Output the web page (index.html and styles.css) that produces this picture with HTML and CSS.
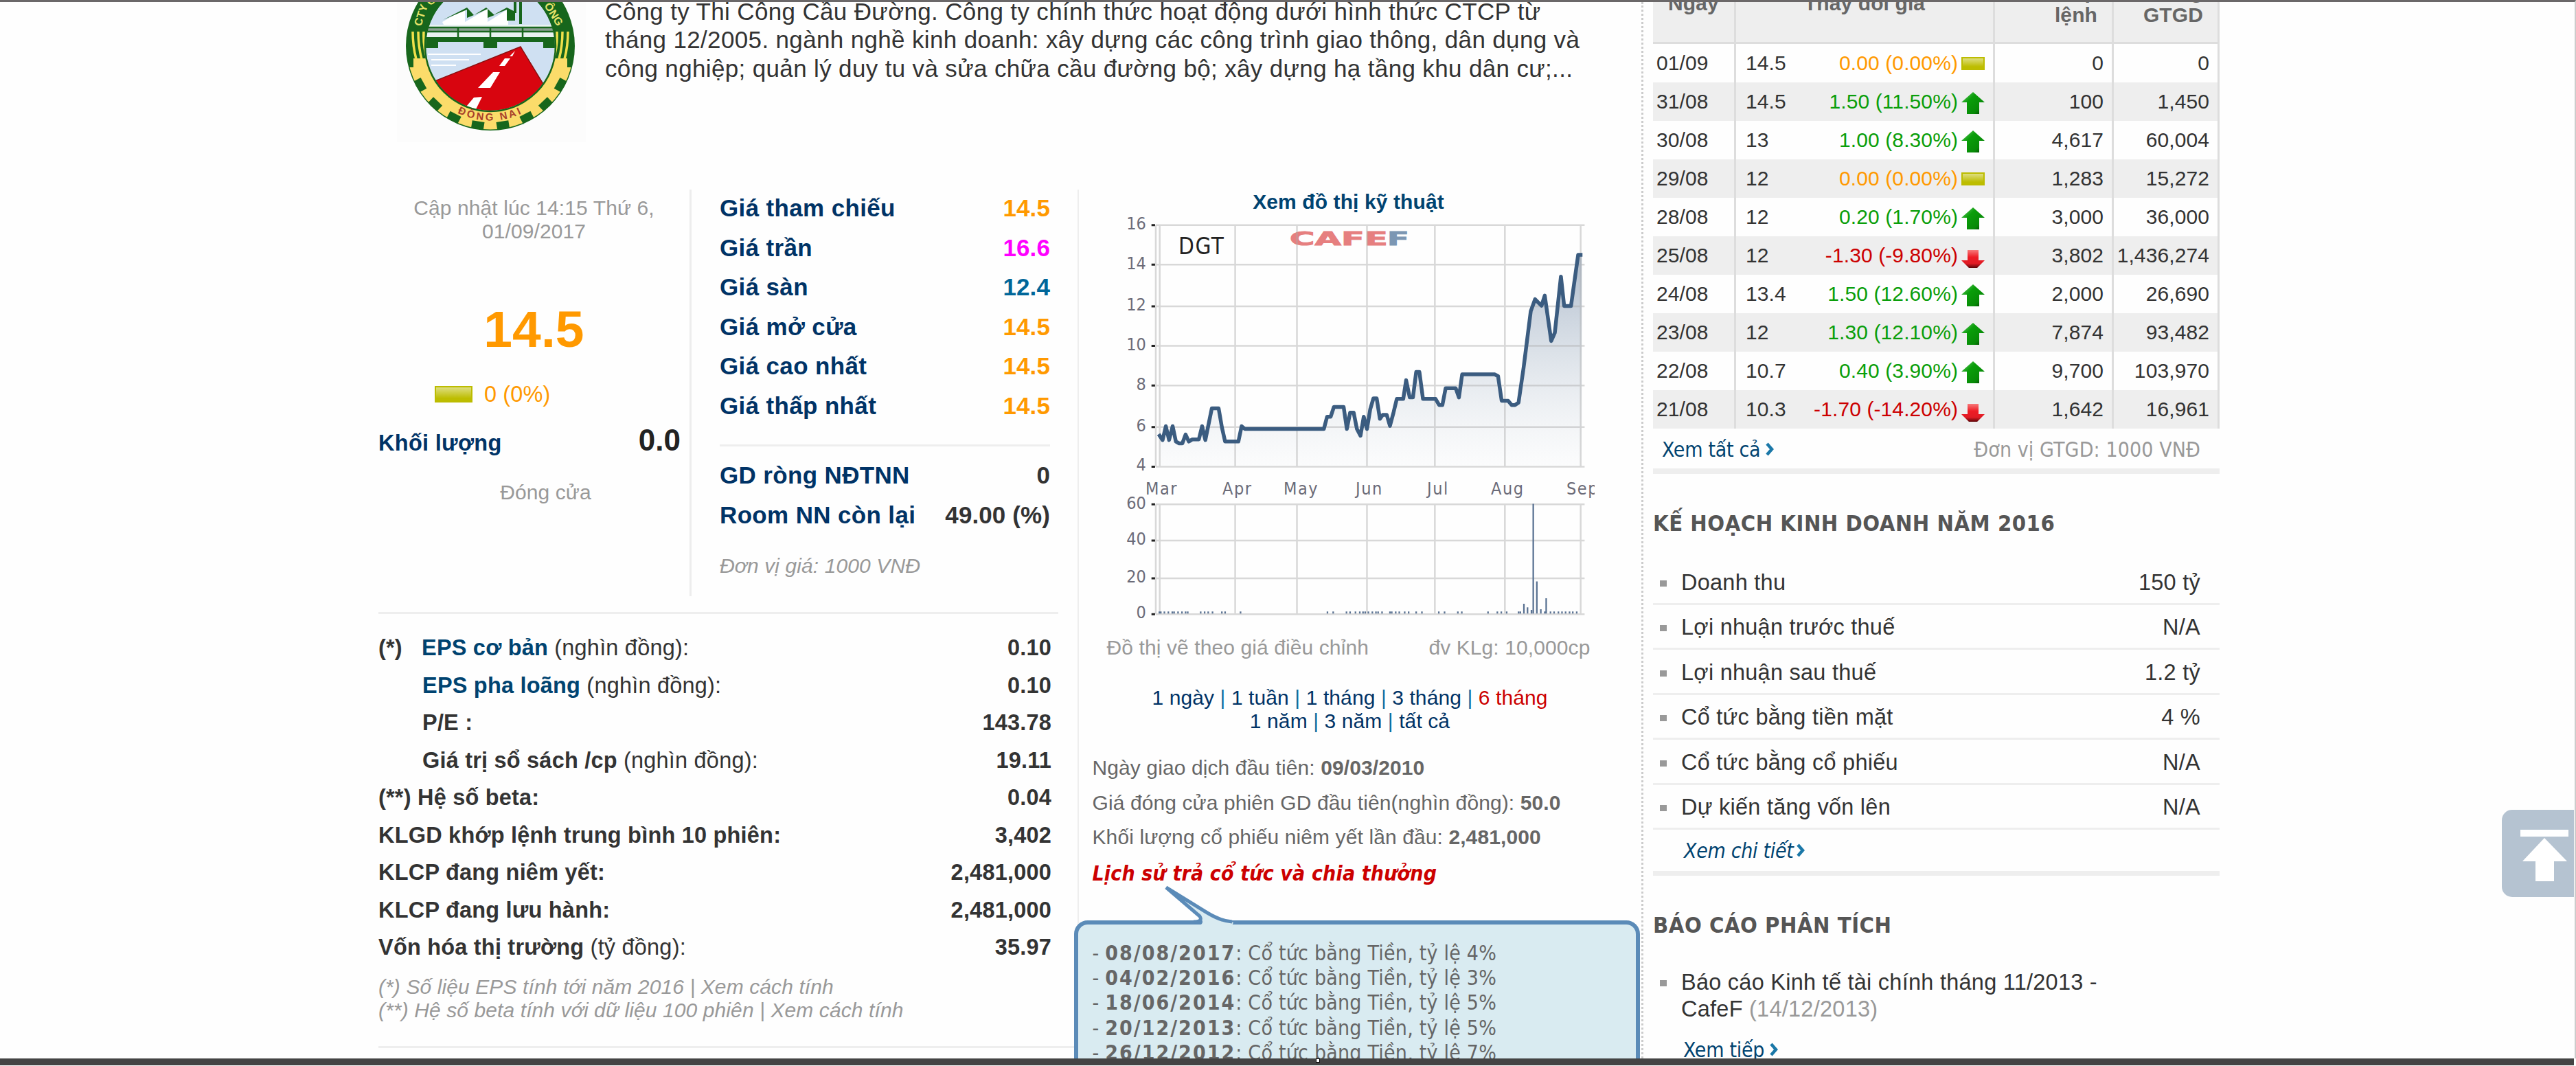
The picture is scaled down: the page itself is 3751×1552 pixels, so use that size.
FILE: index.html
```html
<!DOCTYPE html>
<html lang="vi">
<head>
    <meta charset="UTF-8">
    <title>DGT - CafeF</title>
    <link rel="stylesheet" href="styles.css">
</head>
<body>
<svg class="defs" width="0" height="0">
    <defs>
        <linearGradient id="gUp" x1="0" y1="0" x2="1" y2="1">
            <stop offset="0" stop-color="#7fd07f"/><stop offset=".35" stop-color="#0a9e0a"/><stop offset=".75" stop-color="#078a07"/><stop offset="1" stop-color="#022c02"/>
        </linearGradient>
        <linearGradient id="gDown" x1="0" y1="0" x2="0" y2="1">
            <stop offset="0" stop-color="#f77a7a"/><stop offset=".4" stop-color="#ee1c25"/><stop offset=".75" stop-color="#e01b24"/><stop offset="1" stop-color="#5c0508"/>
        </linearGradient>
        <linearGradient id="gArea" x1="0" y1="0" x2="0" y2="1">
            <stop offset="0" stop-color="#8297b0" stop-opacity=".65"/><stop offset="1" stop-color="#c8d2dc" stop-opacity=".05"/>
        </linearGradient>
        <symbol id="up" viewBox="0 0 34 32"><path d="M17 0 34 15H26V32H8V15H0Z" fill="url(#gUp)"/></symbol>
        <symbol id="down" viewBox="0 0 34 32"><path d="M9 6H25V21H34L23 32H11L0 21H9Z" fill="url(#gDown)"/></symbol>
        <symbol id="chev" viewBox="0 0 12 22"><path d="M2 3 9 11 2 19" fill="none" stroke="#1b78a8" stroke-width="4.5"/></symbol>
    </defs>
</svg>
<div class="page">
    <div class="main">
        <div class="intro">
            <svg class="logo" viewBox="0 0 275 204">
                <defs>
                    <clipPath id="inner"><circle cx="136" cy="64" r="94"/></clipPath>
                    <clipPath id="low"><path d="M0 95H24V82H248V95H275V204H0Z"/></clipPath>
                    <path id="arcBot" d="M66 147A109 109 0 0 0 206 147" fill="none"/>
                    <rect id="tooth" x="-9" y="111" width="18" height="11" fill="#17661c"/>
                </defs>
                <rect width="275" height="204" fill="#fcfcfc"/>
                <circle cx="136" cy="64" r="123" fill="#17661c"/>
                <circle cx="136" cy="64" r="121.5" fill="#fbdc6a" clip-path="url(#low)"/>
                <g transform="translate(136 64)">
                    <use href="#tooth" transform="rotate(9)"/><use href="#tooth" transform="rotate(27)"/><use href="#tooth" transform="rotate(43.5)"/><use href="#tooth" transform="rotate(61)"/>
                    <use href="#tooth" transform="rotate(-9)"/><use href="#tooth" transform="rotate(-27)"/><use href="#tooth" transform="rotate(-43.5)"/><use href="#tooth" transform="rotate(-61)"/>
                </g>
                <path d="M23 43Q23 64 28 83M31 43Q31 64 36 83M39 43Q38 64 44 83M249 43Q249 64 244 83M241 43Q241 64 236 83M233 43Q234 64 228 83" fill="none" stroke="#f0e04a" stroke-width="3.5"/>
                <g clip-path="url(#inner)">
                    <rect x="40" y="-30" width="200" height="190" fill="#cfe0f2"/>
                    <path d="M66 29 99 10V29L132 10V29L162 10V33H68Z" fill="#fff"/>
                    <path d="M40 33H240V52H40Z" fill="#e8f2f0"/>
                    <path d="M67 26 102 8 112 19 102 23V11ZM112 19 130 8 142 19 132 23V10ZM140 19 160 8 172 14V27H160V11Z" fill="#17661c"/>
                    <path d="M180-5V32M172-5V16" stroke="#17661c" stroke-width="4"/>
                    <path d="M40 40H240" stroke="#8a9f90" stroke-width="4"/>
                    <path d="M40 37H240M40 43H240M89 38V54M136 38V54M183 38V54" stroke="#17661c" stroke-width="2.5"/>
                    <path d="M40 51H240V67H213V58H146V67H126V58H60V67H40Z" fill="#17661c"/>
                    <path d="M45 76H122M50 84H105M50 92H86" stroke="#fff" stroke-width="2"/>
                    <path d="M180 65 40 121V165H240L214 121Z" fill="#d8050f" stroke="#8a1010" stroke-width="1.5"/>
                    <path d="M172 71 164 79 168 79ZM157 82 149 93H157L165 82ZM140 102 118 125H136L150 102ZM112 139 96 158H114L124 138Z" fill="#fff"/>
                </g>
                <circle cx="136" cy="64" r="95" fill="none" stroke="#17661c" stroke-width="2.5"/>
                <text class="logo-bottom"><textPath href="#arcBot" startOffset="50%">ĐỒNG NAI</textPath></text>
                <text class="logo-side" transform="translate(35 36) rotate(-72)">CTY</text>
                <text class="logo-side" transform="translate(50 6) rotate(-50)">C</text>
                <text class="logo-side" transform="translate(214 5) rotate(58)">ÔNG</text>
            </svg>
            <p class="intro-text">Công ty Thi Công Cầu Đường. Công ty chính thức hoạt động dưới hình thức CTCP từ<br>tháng 12/2005. ngành nghề kinh doanh: xây dựng các công trình giao thông, dân dụng và<br>công nghiệp; quản lý duy tu và sửa chữa cầu đường bộ; xây dựng hạ tầng khu dân cư;...</p>
        </div>

        <div class="content">
            <div class="left">
                <div class="quote">
                    <div class="price-box">
                        <div class="updated">Cập nhật lúc 14:15 Thứ 6,<br>01/09/2017</div>
                        <div class="price">14.5</div>
                        <div class="change"><i class="flat"></i><span>0 (0%)</span></div>
                        <div class="volume"><b>Khối lượng</b><strong>0.0</strong></div>
                        <div class="closed">Đóng cửa</div>
                    </div>
                    <div class="price-list">
                        <div class="row"><span>Giá tham chiếu</span><b class="orange">14.5</b></div>
                        <div class="row"><span>Giá trần</span><b class="pink">16.6</b></div>
                        <div class="row"><span>Giá sàn</span><b class="blue">12.4</b></div>
                        <div class="row"><span>Giá mở cửa</span><b class="orange">14.5</b></div>
                        <div class="row"><span>Giá cao nhất</span><b class="orange">14.5</b></div>
                        <div class="row"><span>Giá thấp nhất</span><b class="orange">14.5</b></div>
                        <hr>
                        <div class="row"><span>GD ròng NĐTNN</span><b>0</b></div>
                        <div class="row"><span>Room NN còn lại</span><b>49.00 (%)</b></div>
                        <div class="unit">Đơn vị giá: 1000 VNĐ</div>
                    </div>
                </div>
                <div class="index">
                    <div class="row"><span><b class="mark">(*)</b><b class="link">EPS cơ bản</b> (nghìn đồng):</span><b>0.10</b></div>
                    <div class="row sub"><span><b class="link">EPS pha loãng</b> (nghìn đồng):</span><b>0.10</b></div>
                    <div class="row sub"><b>P/E :</b><b>143.78</b></div>
                    <div class="row sub"><span><b>Giá trị sổ sách /cp</b> (nghìn đồng):</span><b>19.11</b></div>
                    <div class="row"><b>(**) Hệ số beta:</b><b>0.04</b></div>
                    <div class="row"><b>KLGD khớp lệnh trung bình 10 phiên:</b><b>3,402</b></div>
                    <div class="row"><b>KLCP đang niêm yết:</b><b>2,481,000</b></div>
                    <div class="row"><b>KLCP đang lưu hành:</b><b>2,481,000</b></div>
                    <div class="row"><span><b>Vốn hóa thị trường</b> (tỷ đồng):</span><b>35.97</b></div>
                </div>
                <div class="notes">(*) Số liệu EPS tính tới năm 2016 | Xem cách tính<br>(**) Hệ số beta tính với dữ liệu 100 phiên | Xem cách tính</div>
            </div>

            <div class="chart-col">
                <div class="chart-title">Xem đồ thị kỹ thuật</div>
                <svg class="chart" viewBox="1636 312 686 590">
                    <text class="mark-red" x="1878" y="357" textLength="143" lengthAdjust="spacingAndGlyphs">CAFE</text>
                    <text class="mark-blue" x="2020" y="357" textLength="32" lengthAdjust="spacingAndGlyphs">F</text>
                    <g class="plot" transform="translate(1570 250) scale(.523 .4464)">
                        <path class="area" d="M227 860 235 875 244 830 253 875 263 830 272 880 281 886 290 886 299 857 308 880 318 873 336 873 345 830 354 875 372 772 391 772 400 833 409 880 446 880 455 830 464 839 684 839 693 799 703 799 712 767 739 767 748 839 757 786 767 786 776 839 786 861 795 799 804 839 813 775 822 739 831 739 840 806 848 793 859 793 868 829 878 785 887 741 905 741 913 680 923 736 932 736 941 653 950 653 960 741 995 741 1005 761 1014 761 1023 706 1051 706 1060 736 1069 661 1160 661 1169 667 1179 747 1197 747 1207 761 1216 761 1226 753 1240 640 1260 455 1272 416 1290 437 1299 404 1317 552 1327 525 1344 342 1353 438 1372 438 1392 271 1402 271V962H227Z"/>
                        <path class="grid" d="M216 174H1410M216 303H1410M216 439H1410M216 568H1410M216 697H1410M216 833H1410M216 962H1410M216 174V962M227 174V962M437 174V962M609 174V962M804 174V962M993 174V962M1188 174V962M1399 174V962M216 1085H1410M216 1203H1410M216 1326H1410M216 1443H1410M216 1085V1443M227 1085V1443M437 1085V1443M609 1085V1443M804 1085V1443M993 1085V1443M1188 1085V1443M1399 1085V1443"/>
                        <path class="tick" d="M204 174H214M204 303H214M204 439H214M204 568H214M204 697H214M204 833H214M204 962H214M204 1085H214M204 1203H214M204 1326H214M204 1443H214"/>
                        <path class="line" d="M224 856 235 875 244 830 253 875 263 830 272 880 281 886 290 886 299 857 308 880 318 873 336 873 345 830 354 875 372 772 391 772 400 833 409 880 446 880 455 830 464 839 684 839 693 799 703 799 712 767 739 767 748 839 757 786 767 786 776 839 786 861 795 799 804 839 813 775 822 739 831 739 840 806 848 793 859 793 868 829 878 785 887 741 905 741 913 680 923 736 932 736 941 653 950 653 960 741 995 741 1005 761 1014 761 1023 706 1051 706 1060 736 1069 661 1160 661 1169 667 1179 747 1197 747 1207 761 1216 761 1226 753 1240 640 1260 455 1272 416 1290 437 1299 404 1317 552 1327 525 1344 342 1353 438 1372 438 1392 271 1404 271"/>
                        <path class="bars" d="M226 1441V1434M230 1441V1434M240 1441V1434M251 1441V1434M262 1441V1434M267 1441V1434M278 1441V1434M289 1441V1434M299 1441V1434M305 1441V1434M341 1441V1434M352 1441V1434M362 1441V1434M374 1441V1434M400 1441V1434M409 1441V1434M452 1441V1434M694 1441V1434M710 1441V1434M747 1441V1434M757 1441V1434M772 1441V1434M784 1441V1434M793 1441V1434M799 1441V1434M808 1441V1434M819 1441V1434M829 1441V1434M835 1441V1434M846 1441V1434M868 1441V1434M873 1441V1434M884 1441V1434M894 1441V1434M909 1441V1434M920 1441V1434M941 1441V1434M957 1441V1434M1004 1441V1434M1020 1441V1434M1057 1441V1434M1068 1441V1434M1141 1441V1434M1167 1441V1434M1178 1441V1434M1193 1441V1434M1226 1441V1434M1231 1441V1434M1241 1441V1409M1251 1441V1421M1262 1441V1429M1267 1441V1083M1277 1441V1336M1288 1441V1427M1299 1441V1434M1303 1441V1391M1315 1441V1434M1325 1441V1434M1337 1441V1434M1347 1441V1434M1357 1441V1434M1368 1441V1434M1377 1441V1434M1388 1441V1434"/>
                    </g>
                    <g class="axis">
                        <text x="1669" y="334">16</text><text x="1669" y="392">14</text><text x="1669" y="452">12</text><text x="1669" y="510">10</text><text x="1669" y="568">8</text><text x="1669" y="628">6</text><text x="1669" y="685">4</text>
                        <text x="1669" y="741">60</text><text x="1669" y="793">40</text><text x="1669" y="848">20</text><text x="1669" y="900">0</text>
                    </g>
                    <g class="months">
                        <text x="1668" y="720">Mar</text><text x="1780" y="720">Apr</text><text x="1869" y="720">May</text><text x="1974" y="720">Jun</text><text x="2078" y="720">Jul</text><text x="2171" y="720">Aug</text><text x="2281" y="720">Sep</text>
                    </g>
                    <text class="ticker" x="1716" y="370" textLength="66">DGT</text>
                </svg>
                <div class="caption"><span>Đồ thị vẽ theo giá điều chỉnh</span><span>đv KLg: 10,000cp</span></div>
                <div class="ranges"><a>1 ngày</a> | <a>1 tuần</a> | <a>1 tháng</a> | <a>3 tháng</a> | <a class="on">6 tháng</a><br><a>1 năm</a> | <a>3 năm</a> | <a>tất cả</a></div>
                <div class="facts">
                    <div>Ngày giao dịch đầu tiên: <b>09/03/2010</b></div>
                    <div>Giá đóng cửa phiên GD đầu tiên(nghìn đồng): <b>50.0</b></div>
                    <div>Khối lượng cổ phiếu niêm yết lần đầu: <b>2,481,000</b></div>
                </div>
                <div class="history-title">Lịch sử trả cổ tức và chia thưởng</div>
                <div class="callout">
                    <svg class="pointer" viewBox="0 0 110 60"><path d="M56 57Q60 52 49 42L4 4 60 39Q84 53 102 55L100 60H52Z" fill="#d9ebf1"/><path d="M44 54Q58 54 53 46L4 4 64 41Q84 53 100 54" fill="none" stroke="#5b8bb8" stroke-width="5"/></svg>
                    <div>- <b>08/08/2017</b><span>: Cổ tức bằng Tiền, tỷ lệ 4%</span></div>
                    <div>- <b>04/02/2016</b><span>: Cổ tức bằng Tiền, tỷ lệ 3%</span></div>
                    <div>- <b>18/06/2014</b><span>: Cổ tức bằng Tiền, tỷ lệ 5%</span></div>
                    <div>- <b>20/12/2013</b><span>: Cổ tức bằng Tiền, tỷ lệ 5%</span></div>
                    <div>- <b>26/12/2012</b><span>: Cổ tức bằng Tiền, tỷ lệ 7%</span></div>
                </div>
            </div>
        </div>
    </div>

    <div class="side">
        <table class="prices">
            <colgroup><col class="day"><col class="close"><col class="diff"><col class="vol"><col class="val"></colgroup>
            <tr><th><div>Ngày</div></th><th colspan="2"><div>Thay đổi giá</div></th><th class="two"><div>khớp<br>lệnh</div></th><th class="two"><div>Tổng<br>GTGD</div></th></tr>
            <tr><td>01/09</td><td>14.5</td><td class="flat-text">0.00 (0.00%)<i class="flat"></i></td><td>0</td><td>0</td></tr>
            <tr><td>31/08</td><td>14.5</td><td class="up-text">1.50 (11.50%)<svg><use href="#up"/></svg></td><td>100</td><td>1,450</td></tr>
            <tr><td>30/08</td><td>13</td><td class="up-text">1.00 (8.30%)<svg><use href="#up"/></svg></td><td>4,617</td><td>60,004</td></tr>
            <tr><td>29/08</td><td>12</td><td class="flat-text">0.00 (0.00%)<i class="flat"></i></td><td>1,283</td><td>15,272</td></tr>
            <tr><td>28/08</td><td>12</td><td class="up-text">0.20 (1.70%)<svg><use href="#up"/></svg></td><td>3,000</td><td>36,000</td></tr>
            <tr><td>25/08</td><td>12</td><td class="down-text">-1.30 (-9.80%)<svg><use href="#down"/></svg></td><td>3,802</td><td>1,436,274</td></tr>
            <tr><td>24/08</td><td>13.4</td><td class="up-text">1.50 (12.60%)<svg><use href="#up"/></svg></td><td>2,000</td><td>26,690</td></tr>
            <tr><td>23/08</td><td>12</td><td class="up-text">1.30 (12.10%)<svg><use href="#up"/></svg></td><td>7,874</td><td>93,482</td></tr>
            <tr><td>22/08</td><td>10.7</td><td class="up-text">0.40 (3.90%)<svg><use href="#up"/></svg></td><td>9,700</td><td>103,970</td></tr>
            <tr><td>21/08</td><td>10.3</td><td class="down-text">-1.70 (-14.20%)<svg><use href="#down"/></svg></td><td>1,642</td><td>16,961</td></tr>
        </table>
        <div class="table-foot"><a class="more">Xem tất cả<svg><use href="#chev"/></svg></a><span>Đơn vị GTGD: 1000 VNĐ</span></div>

        <h2>KẾ HOẠCH KINH DOANH NĂM 2016</h2>
        <ul class="plan">
            <li><span>Doanh thu</span><span>150 tỷ</span></li>
            <li><span>Lợi nhuận trước thuế</span><span>N/A</span></li>
            <li><span>Lợi nhuận sau thuế</span><span>1.2 tỷ</span></li>
            <li><span>Cổ tức bằng tiền mặt</span><span>4 %</span></li>
            <li><span>Cổ tức bằng cổ phiếu</span><span>N/A</span></li>
            <li><span>Dự kiến tăng vốn lên</span><span>N/A</span></li>
        </ul>
        <div class="detail"><a class="more"><em>Xem chi tiết</em><svg><use href="#chev"/></svg></a></div>

        <h2>BÁO CÁO PHÂN TÍCH</h2>
        <ul class="reports">
            <li>Báo cáo Kinh tế tài chính tháng 11/2013 -<br>CafeF <small>(14/12/2013)</small></li>
        </ul>
        <div class="next"><a class="more">Xem tiếp<svg><use href="#chev"/></svg></a></div>
    </div>
</div>

<div class="to-top"><svg viewBox="0 0 105 127"><path d="M27 29H97V39H27ZM62 41 95 75H76V104H49V75H30Z" fill="#fff"/></svg></div>
<div class="bottom-bar"><i></i></div>
</body>
</html>
```
FILE: styles.css
```css
body {
    margin: 0;
    width: 3751px;
    height: 1552px;
    overflow: hidden;
    position: relative;
    background: #fefefe;
    font-family: "Liberation Sans", Arial, sans-serif;
    font-size: 30px;
    letter-spacing: .1px;
    color: #333;
}
.defs {
    position: absolute;
}
.page {
    display: flex;
    box-sizing: border-box;
    height: 1541px;
    padding-left: 551px;
    border-top: 3px solid #6b6869;
    border-right: 2px solid #ccc;
    overflow: hidden;
}
.main {
    width: 1839px;
    flex: none;
}
.intro {
    display: flex;
    height: 273px;
}
.logo {
    flex: none;
    width: 275px;
    height: 204px;
    margin-left: 27px;
}
.logo-bottom {
    font-size: 15px;
    font-weight: bold;
    letter-spacing: 3px;
    text-anchor: middle;
    fill: #a8402a;
}
.logo-side {
    font-size: 16px;
    font-weight: bold;
    fill: #e6e36a;
}
.intro-text {
    margin: -7px 0 0 28px;
    font-size: 35px;
    line-height: 41.25px;
    letter-spacing: .35px;
    white-space: nowrap;
}
.content {
    display: flex;
}
.left {
    width: 1017.5px;
    flex: none;
}
.quote {
    display: flex;
    width: 990px;
    height: 592px;
    margin-bottom: 23px;
}
.price-box {
    box-sizing: border-box;
    width: 456px;
    padding-top: 10px;
    border-right: 3px solid #ededed;
}
.updated {
    line-height: 34.3px;
    text-align: center;
    color: #999;
}
.price {
    margin-top: 79px;
    font-size: 75px;
    line-height: 90px;
    font-weight: bold;
    text-align: center;
    color: #f90;
}
.flat {
    display: inline-block;
    box-sizing: border-box;
    width: 55px;
    height: 24px;
    border: 2px solid #bcbc00;
    background: linear-gradient(#dede80, #bdbd00 80%);
}
.change {
    display: flex;
    align-items: center;
    gap: 17px;
    margin-top: 30px;
    padding-left: 82px;
    font-size: 32.5px;
    line-height: 40px;
    color: #f90;
}
.volume {
    display: flex;
    justify-content: space-between;
    align-items: baseline;
    width: 440px;
    margin-top: 22px;
    font-size: 32.5px;
    line-height: 50px;
    letter-spacing: .3px;
    color: #036;
}
.volume strong {
    font-size: 44px;
    letter-spacing: 0;
    color: #222;
}
.closed {
    margin-top: 27px;
    padding-left: 34px;
    line-height: 40px;
    text-align: center;
    color: #999;
}
.row {
    display: flex;
    justify-content: space-between;
    white-space: nowrap;
}
.price-list {
    width: 481px;
    margin: -2px 0 0 41px;
}
.price-list .row {
    font-size: 35px;
    line-height: 57.5px;
    font-weight: bold;
}
.price-list .row span {
    letter-spacing: .35px;
    color: #036;
}
.price-list .orange {
    color: #f90;
}
.price-list .pink {
    color: #f0f;
}
.price-list .blue {
    color: #069;
}
.price-list hr {
    height: 3px;
    margin: 28px 0 13px;
    border: 0;
    background: #eee;
}
.unit {
    margin-top: 26px;
    line-height: 40px;
    font-style: italic;
    color: #999;
}
.index {
    width: 980px;
    padding: 22px 10px 0 0;
    border-top: 3px solid #eee;
    letter-spacing: .2px;
}
.index .row {
    font-size: 32.5px;
    line-height: 54.5px;
}
.index .sub {
    padding-left: 64px;
}
.index .mark {
    display: inline-block;
    width: 63px;
}
.index .link {
    color: #004370;
}
.notes {
    width: 1013px;
    margin-top: 13px;
    padding-bottom: 35px;
    border-bottom: 3px solid #eee;
    line-height: 34.4px;
    font-style: italic;
    color: #999;
}
.chart-col {
    width: 786px;
    border-left: 2px solid #eee;
}
.chart-title {
    line-height: 36px;
    font-weight: bold;
    text-align: center;
    color: #004370;
}
.chart {
    display: block;
    width: 686px;
    height: 590px;
    margin-left: 65px;
    font-family: "DejaVu Sans Condensed", Tahoma, sans-serif;
}
.plot path {
    vector-effect: non-scaling-stroke;
    fill: none;
}
.plot .area {
    fill: url(#gArea);
}
.plot .grid {
    stroke: rgba(170, 170, 170, .45);
    stroke-width: 2.5;
}
.plot .tick {
    stroke: #222;
    stroke-width: 3;
}
.plot .line {
    stroke: #3b5c80;
    stroke-width: 5.5;
    stroke-linejoin: round;
}
.plot .bars {
    stroke: #5b7393;
    stroke-width: 2.3;
}
.axis text,
.months text {
    font-size: 25px;
    fill: #6b6b78;
}
.axis text {
    text-anchor: end;
}
.months text {
    letter-spacing: 1.5px;
}
.ticker {
    font-size: 33px;
    fill: #222;
}
.mark-red,
.mark-blue {
    font-family: "DejaVu Sans";
    font-size: 26px;
    font-weight: bold;
    stroke: #e67f7f;
    fill: #e67f7f;
}
.mark-blue {
    stroke: #7c97b3;
    fill: #7c97b3;
}
.caption {
    display: flex;
    justify-content: space-between;
    width: 704px;
    margin: 23px 0 0 41px;
    line-height: 36px;
    color: #999;
}
.ranges {
    padding-left: 4px;
    margin-top: 38px;
    line-height: 34.2px;
    text-align: center;
    color: #0a6da0;
}
.ranges a {
    color: #036;
}
.ranges .on {
    color: #c00;
}
.facts {
    margin: 26px 0 0 20px;
    line-height: 50.5px;
    color: #666;
    white-space: nowrap;
}
.history-title {
    margin: 7px 0 0 20px;
    font: italic bold 30px/40px "DejaVu Sans Condensed", Tahoma, sans-serif;
    letter-spacing: .15px;
    color: #c00;
    white-space: nowrap;
}
.callout {
    position: relative;
    box-sizing: border-box;
    width: 824px;
    height: 260px;
    margin: 48px 0 0 -7px;
    padding: 24px 0 0 21px;
    border: 6px solid #5b8bb8;
    border-radius: 20px;
    background: #d9ebf1;
    font: 30px/36.2px "DejaVu Sans Condensed", Tahoma, sans-serif;
    letter-spacing: .22px;
    color: #666;
}
.callout b {
    letter-spacing: 2px;
}
.pointer {
    position: absolute;
    left: 124px;
    top: -58px;
    width: 110px;
    height: 60px;
}
.side {
    flex: none;
    width: 825px;
    padding-left: 14px;
    border-left: 3px dotted #ccc;
}
.prices {
    width: 825px;
    border-collapse: separate;
    border-spacing: 0;
    table-layout: fixed;
}
.day {
    width: 121px;
}
.close {
    width: 110px;
}
.diff {
    width: 267px;
}
.vol {
    width: 173px;
}
.prices th,
.prices td {
    box-sizing: border-box;
    padding: 0;
    border-right: 3px solid #ddd;
    white-space: nowrap;
}
.prices th {
    height: 61px;
    border-bottom: 3px solid #ddd;
    background: #eee;
    line-height: 34.4px;
    vertical-align: top;
    color: #666;
}
.prices th div {
    height: 40px;
    margin-top: -15px;
}
.prices .two {
    padding-right: 21px;
    text-align: right;
}
.prices .two div {
    margin-top: -32px;
}
.prices td {
    height: 56px;
    padding-right: 12px;
    line-height: 54px;
    text-align: right;
}
.prices td:nth-child(1) {
    padding-left: 5px;
    text-align: left;
}
.prices td:nth-child(2) {
    padding-left: 14px;
    border-right: 0;
    text-align: left;
}
.prices tr:nth-child(odd) td {
    background: #eee;
}
.prices .flat {
    width: 34px;
    height: 19px;
    margin-left: 5px;
}
.prices svg {
    width: 34px;
    height: 32px;
    margin-left: 5px;
    vertical-align: -8px;
}
.prices .flat-text {
    color: #f90;
}
.prices .up-text {
    color: #0a9e0a;
}
.prices .down-text {
    color: #c00;
}
.table-foot {
    display: flex;
    justify-content: space-between;
    height: 58px;
    padding: 0 28px 0 13px;
    border-bottom: 8px solid #eee;
    font: 30px/61px "DejaVu Sans Condensed", Tahoma, sans-serif;
    color: #999;
}
.more {
    font-family: "DejaVu Sans Condensed", Tahoma, sans-serif;
    letter-spacing: -.3px;
    color: #004370;
}
.more svg {
    width: 12px;
    height: 22px;
    margin-left: 8px;
}
.side h2 {
    margin: 51px 0 0 0;
    font: bold 32.5px/42px "DejaVu Sans Condensed", Tahoma, sans-serif;
    letter-spacing: .5px;
    color: #555;
    white-space: nowrap;
}
.side ul {
    list-style: none;
    margin: 0;
    padding: 0;
    font-size: 32.5px;
    letter-spacing: .25px;
}
.side .plan {
    margin-top: 32px;
}
.plan li {
    display: flex;
    justify-content: space-between;
    padding: 2.5px 28px 0 10px;
    border-bottom: 3px solid #eee;
    line-height: 60px;
}
.plan span:first-child::before,
.reports li::before {
    content: "";
    display: inline-block;
    width: 10px;
    height: 9px;
    margin-right: 21px;
    background: #999;
    vertical-align: 5px;
}
.detail {
    height: 60px;
    padding-left: 45px;
    border-bottom: 7px solid #eee;
    line-height: 62px;
}
.detail svg {
    margin-left: 4px;
}
.side .reports {
    margin-top: 43px;
}
.reports li {
    padding-left: 41px;
    text-indent: -31px;
    line-height: 39px;
}
.reports small {
    font-size: 32.5px;
    color: #999;
}
.next {
    margin-top: 20px;
    padding-left: 44px;
    line-height: 40px;
}
.to-top {
    position: absolute;
    right: 3px;
    top: 1179px;
    width: 105px;
    height: 127px;
    border-radius: 15px 0 0 15px;
    background: #b5c3d1;
}
.bottom-bar {
    width: 3748px;
    height: 10px;
    background: #444;
}
.bottom-bar i {
    display: block;
    width: 4px;
    height: 4px;
    margin-left: 1916px;
    border: 1px solid #000;
    background: #fff;
}
```
